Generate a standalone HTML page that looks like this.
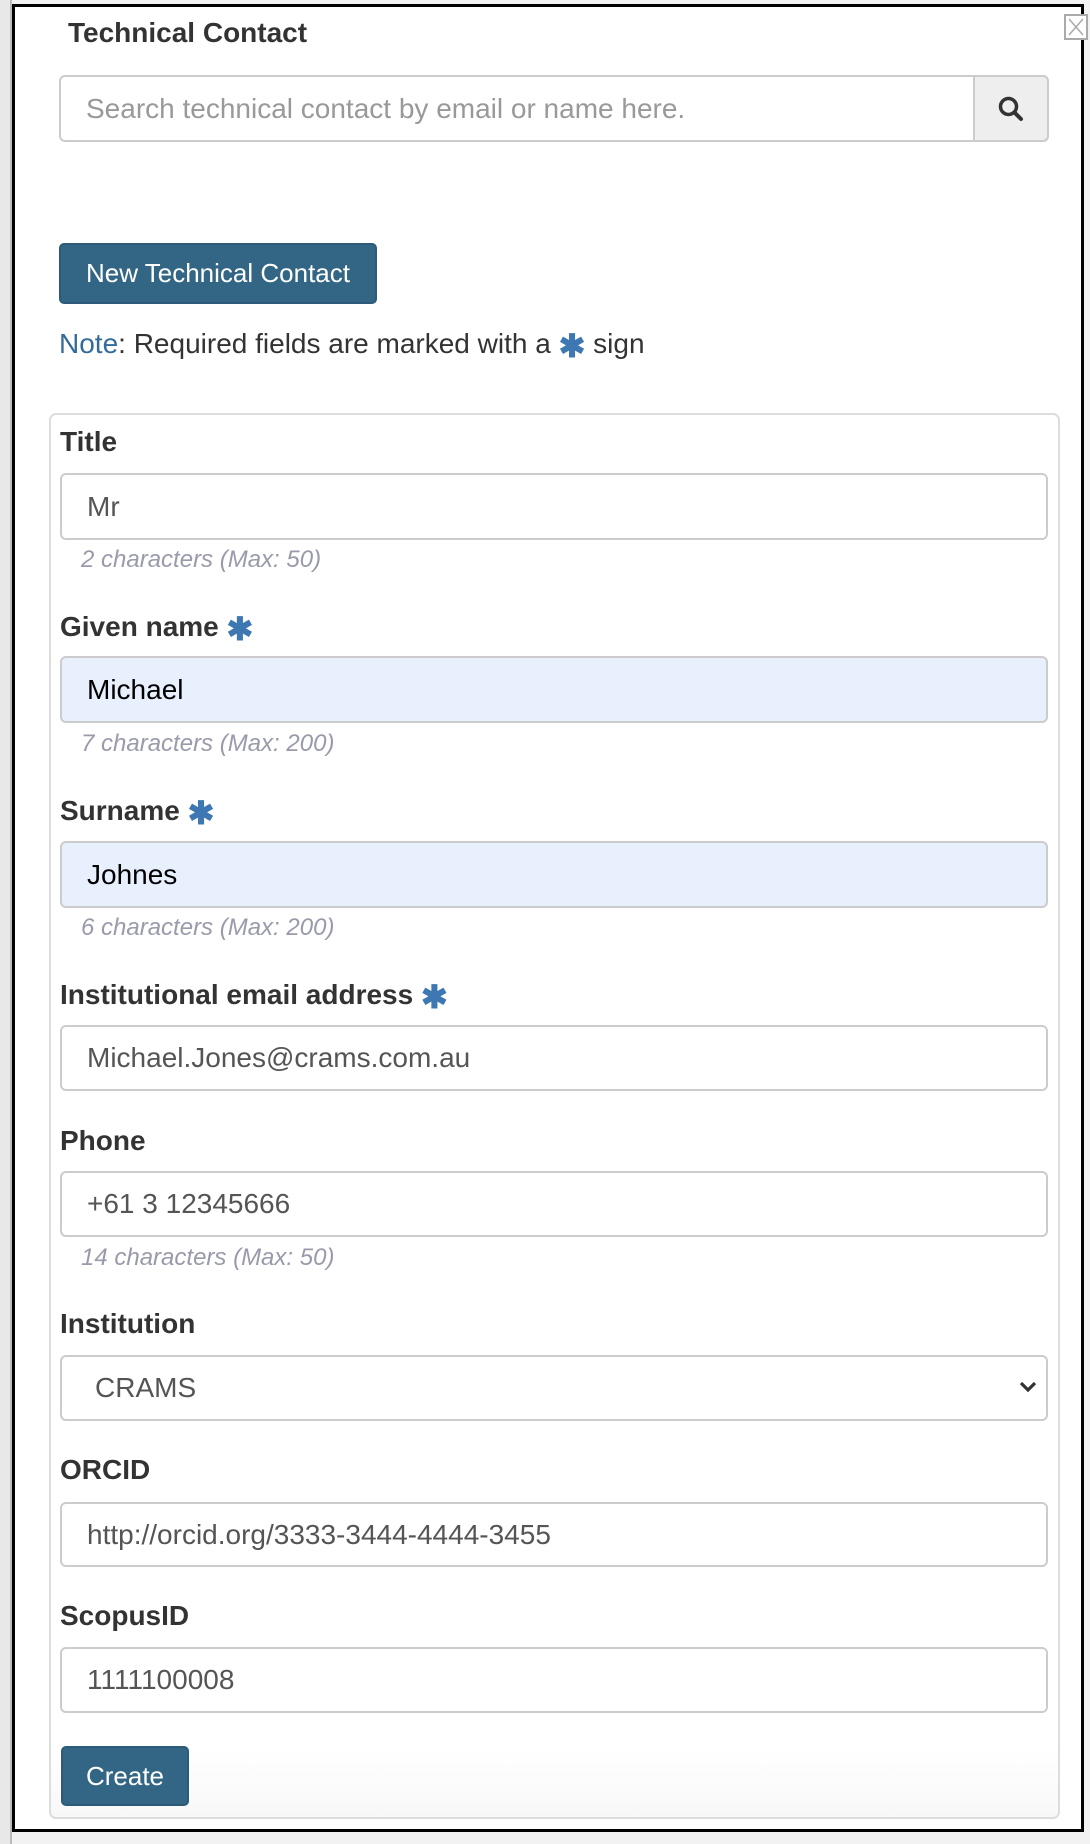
<!DOCTYPE html>
<html><head><meta charset="utf-8"><style>
*{box-sizing:border-box;margin:0;padding:0}
body{width:1090px;height:1844px;background:#f2f2f2;font-family:"Liberation Sans",Arial,sans-serif;position:relative;overflow:hidden}
.a{position:absolute}
.frame{left:12px;top:4px;width:1072px;height:1828px;border:3px solid #000;background:#fff}
.strip{left:0;top:0;width:12px;height:1844px;background:#e8e8e8;border-right:2px solid #bbb}
.h{left:68px;top:17px;font-size:28px;font-weight:bold;color:#333}
.inp{border:2px solid #ccc;border-radius:6px;background:#fff;font-size:28px;color:#555;padding-left:25px;display:flex;align-items:center}
.btn{background:#336685;border:2px solid #2c5a78;border-radius:5px;color:#fff;font-size:26px;display:flex;align-items:center;justify-content:center}
.lbl{left:60px;font-size:28px;font-weight:bold;color:#333}
.hint{left:81px;font-size:24px;font-style:italic;color:#999aaa}
.st{color:#3d78b3;font-size:32px;font-weight:bold;vertical-align:-4px}
.auto{background:#e8f0fe;color:#000}
</style></head><body>
<div class="a strip"></div>
<div class="a frame"></div>
<div class="a" style="left:1064px;top:14px;width:24px;height:26px;border:2px solid #aaa;background:#fff"><svg width="20" height="22"><path d="M3 3L17 19M17 3L3 19" stroke="#aaa" stroke-width="1.5"/></svg></div>
<div class="a h">Technical Contact</div>
<div class="a inp" style="left:59px;top:75px;width:990px;height:67px;color:#999">Search technical contact by email or name here.</div>
<div class="a" style="left:973px;top:75px;width:76px;height:67px;background:#eee;border:2px solid #ccc;border-radius:0 6px 6px 0;display:flex;align-items:center;justify-content:center"><svg width="28" height="28" viewBox="0 0 28 28"><circle cx="11.5" cy="11.5" r="8" fill="none" stroke="#333" stroke-width="3.5"/><path d="M17.5 17.5L24 24" stroke="#333" stroke-width="4" stroke-linecap="round"/></svg></div>
<div class="a btn" style="left:59px;top:243px;width:318px;height:61px">New Technical Contact</div>
<div class="a" style="left:59px;top:327px;font-size:28px;color:#333"><span style="color:#336c9b">Note</span>: Required fields are marked with a <span class="st">✱</span> sign</div>
<div class="a" style="left:49px;top:413px;width:1011px;height:1406px;border:2px solid #ddd;border-radius:7px;background:linear-gradient(#fff 95%,#f8f8f8)"></div>

<div class="a lbl" style="top:426px">Title</div>
<div class="a inp" style="left:60px;top:473px;width:988px;height:67px">Mr</div>
<div class="a hint" style="top:546px">2 characters (Max: 50)</div>

<div class="a lbl" style="top:610px">Given name <span class="st">✱</span></div>
<div class="a inp auto" style="left:60px;top:656px;width:988px;height:67px">Michael</div>
<div class="a hint" style="top:730px">7 characters (Max: 200)</div>

<div class="a lbl" style="top:794px">Surname <span class="st">✱</span></div>
<div class="a inp auto" style="left:60px;top:841px;width:988px;height:67px">Johnes</div>
<div class="a hint" style="top:914px">6 characters (Max: 200)</div>

<div class="a lbl" style="top:978px">Institutional email address <span class="st">✱</span></div>
<div class="a inp" style="left:60px;top:1025px;width:988px;height:66px">Michael.Jones@crams.com.au</div>

<div class="a lbl" style="top:1125px">Phone</div>
<div class="a inp" style="left:60px;top:1171px;width:988px;height:66px">+61 3 12345666</div>
<div class="a hint" style="top:1244px">14 characters (Max: 50)</div>

<div class="a lbl" style="top:1308px">Institution</div>
<div class="a inp" style="left:60px;top:1355px;width:988px;height:66px;padding-left:33px">CRAMS</div>
<svg class="a" style="left:1019px;top:1380px" width="18" height="14"><path d="M2 3L9 10L16 3" fill="none" stroke="#333" stroke-width="3.2"/></svg>

<div class="a lbl" style="top:1454px">ORCID</div>
<div class="a inp" style="left:60px;top:1502px;width:988px;height:65px">http://orcid.org/3333-3444-4444-3455</div>

<div class="a lbl" style="top:1600px">ScopusID</div>
<div class="a inp" style="left:60px;top:1647px;width:988px;height:66px">1111100008</div>

<div class="a btn" style="left:61px;top:1746px;width:128px;height:60px">Create</div>
</body></html>
